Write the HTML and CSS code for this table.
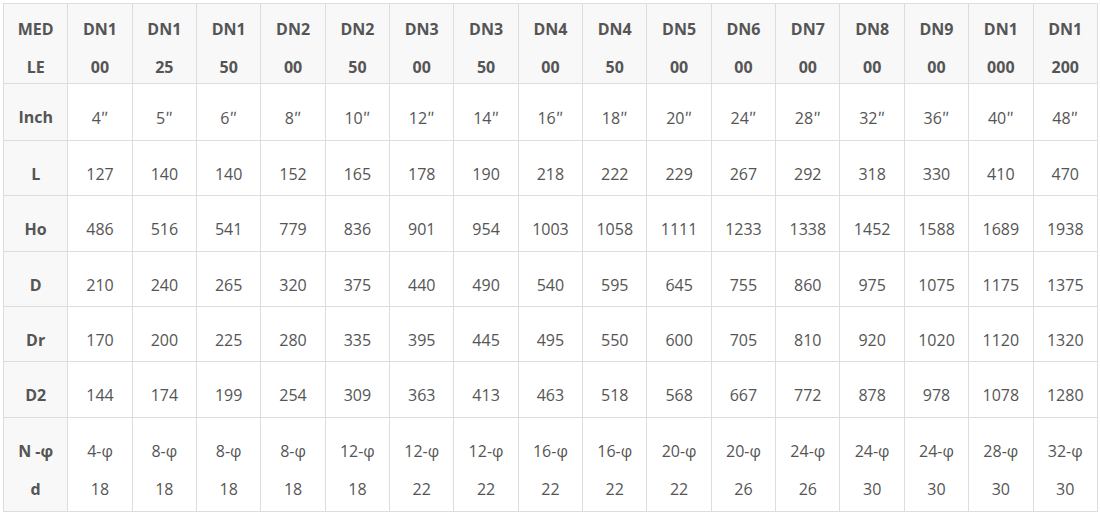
FILE: index.html
```html
<!DOCTYPE html>
<html>
<head>
<meta charset="utf-8">
<link rel="stylesheet" href="styles.css">
</head>
<body>
<div class="wrap">
<table class="spec">
<thead>
<tr>
<th><div class="h">MEDLE</div></th>
<th><div class="h">DN100</div></th>
<th><div class="h">DN125</div></th>
<th><div class="h">DN150</div></th>
<th><div class="h">DN200</div></th>
<th><div class="h">DN250</div></th>
<th><div class="h">DN300</div></th>
<th><div class="h">DN350</div></th>
<th><div class="h">DN400</div></th>
<th><div class="h">DN450</div></th>
<th><div class="h">DN500</div></th>
<th><div class="h">DN600</div></th>
<th><div class="h">DN700</div></th>
<th><div class="h">DN800</div></th>
<th><div class="h">DN900</div></th>
<th><div class="h">DN1000</div></th>
<th><div class="h">DN1200</div></th>
</tr>
</thead>
<tbody>
<tr><th>Inch</th><td>4<span class="pr">″</span></td><td>5<span class="pr">″</span></td><td>6<span class="pr">″</span></td><td>8<span class="pr">″</span></td><td>10<span class="pr">″</span></td><td>12<span class="pr">″</span></td><td>14<span class="pr">″</span></td><td>16<span class="pr">″</span></td><td>18<span class="pr">″</span></td><td>20<span class="pr">″</span></td><td>24<span class="pr">″</span></td><td>28<span class="pr">″</span></td><td>32<span class="pr">″</span></td><td>36<span class="pr">″</span></td><td>40<span class="pr">″</span></td><td>48<span class="pr">″</span></td></tr>
<tr><th>L</th><td>127</td><td>140</td><td>140</td><td>152</td><td>165</td><td>178</td><td>190</td><td>218</td><td>222</td><td>229</td><td>267</td><td>292</td><td>318</td><td>330</td><td>410</td><td>470</td></tr>
<tr><th>Ho</th><td>486</td><td>516</td><td>541</td><td>779</td><td>836</td><td>901</td><td>954</td><td>1003</td><td>1058</td><td>1111</td><td>1233</td><td>1338</td><td>1452</td><td>1588</td><td>1689</td><td>1938</td></tr>
<tr><th>D</th><td>210</td><td>240</td><td>265</td><td>320</td><td>375</td><td>440</td><td>490</td><td>540</td><td>595</td><td>645</td><td>755</td><td>860</td><td>975</td><td>1075</td><td>1175</td><td>1375</td></tr>
<tr><th>Dr</th><td>170</td><td>200</td><td>225</td><td>280</td><td>335</td><td>395</td><td>445</td><td>495</td><td>550</td><td>600</td><td>705</td><td>810</td><td>920</td><td>1020</td><td>1120</td><td>1320</td></tr>
<tr><th>D2</th><td>144</td><td>174</td><td>199</td><td>254</td><td>309</td><td>363</td><td>413</td><td>463</td><td>518</td><td>568</td><td>667</td><td>772</td><td>878</td><td>978</td><td>1078</td><td>1280</td></tr>
<tr><th>N -φ<br>d</th><td>4-φ<br>18</td><td>8-φ<br>18</td><td>8-φ<br>18</td><td>8-φ<br>18</td><td>12-φ<br>18</td><td>12-φ<br>22</td><td>12-φ<br>22</td><td>16-φ<br>22</td><td>16-φ<br>22</td><td>20-φ<br>22</td><td>20-φ<br>26</td><td>24-φ<br>26</td><td>24-φ<br>30</td><td>24-φ<br>30</td><td>28-φ<br>30</td><td>32-φ<br>30</td></tr>
</tbody>
</table>
</div>
</body>
</html>
```
FILE: styles.css
```css
html, body {
  margin: 0;
  padding: 0;
  background: #ffffff;
}

.wrap {
  padding: 3px 0 0 3px;
}

.spec {
  width: 1095px;
  table-layout: fixed;
  border-collapse: collapse;
  font-family: "Open Sans", "Liberation Sans", "DejaVu Sans", sans-serif;
  font-size: 16px;
  line-height: 38.4px;
  color: #555555;
}

.spec th,
.spec td {
  border: 1px solid #dddddd;
  text-align: center;
  vertical-align: top;
  padding: 14px 12px 2px;
  word-break: break-all;
}

.spec th {
  font-weight: 700;
  background: #f8f8f8;
}

.spec td {
  font-weight: 400;
  background: #ffffff;
}

.spec thead th {
  padding: 6px 12px 0;
}

.spec thead .h {
  margin-bottom: -3.5px;
}

.spec .pr {
  font-family: "Noto Sans CJK SC", sans-serif;
}
```
